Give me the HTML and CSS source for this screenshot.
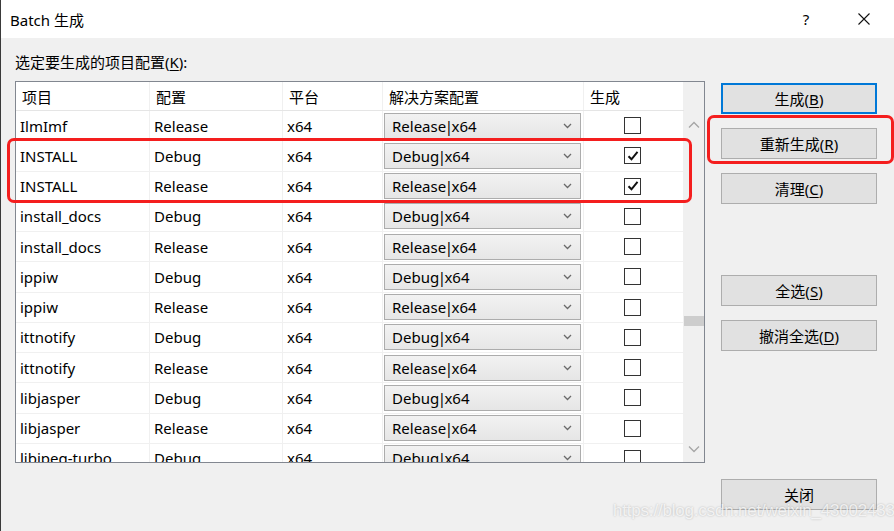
FILE: index.html
```html
<!DOCTYPE html>
<html lang="zh-CN">
<head>
<meta charset="utf-8">
<title>Batch 生成</title>
<link rel="stylesheet" href="styles.css">
</head>
<body>
<div class="window">
  <div class="titlebar">
    <span class="title">Batch 生成</span>
    <span class="tb-help">?</span>
    <span class="tb-close"><svg width="12" height="12" viewBox="0 0 12 12"><path d="M0.5 0.5L11.5 11.5M11.5 0.5L0.5 11.5" stroke="#111" stroke-width="1.1" fill="none"/></svg></span>
  </div>
  <div class="content">
    <div class="left">
      <div class="label">选定要生成的项目配置(<u>K</u>):</div>
      <div class="list">
        <div class="listmain">
          <div class="row head">
            <div class="c c1">项目</div>
            <div class="c c2">配置</div>
            <div class="c c3">平台</div>
            <div class="c c4">解决方案配置</div>
            <div class="c c5">生成</div>
          </div>
          <div class="rows" id="rows"></div>
        </div>
        <div class="scrollbar">
          <div class="headfill"></div>
          <svg class="arrow up" width="12" height="8" viewBox="0 0 12 8"><path d="M1 6.5L6 1.5L11 6.5" stroke="#a6a6a6" stroke-width="1.3" fill="none"/></svg>
          <div class="track"><div class="thumb"></div></div>
          <svg class="arrow down" width="12" height="8" viewBox="0 0 12 8"><path d="M1 1.5L6 6.5L11 1.5" stroke="#a6a6a6" stroke-width="1.3" fill="none"/></svg>
        </div>
      </div>
    </div>
    <div class="right">
      <button class="btn default">生成(<u>B</u>)</button>
      <button class="btn">重新生成(<u>R</u>)</button>
      <button class="btn">清理(<u>C</u>)</button>
      <button class="btn sel">全选(<u>S</u>)</button>
      <button class="btn">撤消全选(<u>D</u>)</button>
      <button class="btn close">关闭</button>
    </div>
  </div>
  <div class="mark mark-rows"></div>
  <div class="mark mark-btn"></div>
  <div class="watermark">https://blog.csdn.net/weixin_43002433</div>
</div>
<script>
var data = [
  ["IlmImf","Release",0],["INSTALL","Debug",1],["INSTALL","Release",1],
  ["install_docs","Debug",0],["install_docs","Release",0],["ippiw","Debug",0],
  ["ippiw","Release",0],["ittnotify","Debug",0],["ittnotify","Release",0],
  ["libjasper","Debug",0],["libjasper","Release",0],["libjpeg-turbo","Debug",0]
];
var chev = '<svg class="chev" width="9" height="6" viewBox="0 0 9 6"><path d="M1 1L4.5 4.5L8 1" stroke="#6a6a6a" stroke-width="1.3" fill="none"/></svg>';
var check = '<svg width="14" height="14" viewBox="0 0 14 14"><path d="M2.5 7.2L5.5 10.3L11.5 2.8" stroke="#111" stroke-width="2" fill="none"/></svg>';
var html = "";
data.forEach(function(d){
  html += '<div class="row">' +
    '<div class="c c1">' + d[0] + '</div>' +
    '<div class="c c2">' + d[1] + '</div>' +
    '<div class="c c3">x64</div>' +
    '<div class="c c4"><div class="combo"><span>' + d[1] + '<span class="pipe">|</span>x64</span>' + chev + '</div></div>' +
    '<div class="c c5"><span class="cb">' + (d[2] ? check : '') + '</span></div>' +
    '</div>';
});
document.getElementById("rows").innerHTML = html;
</script>
</body>
</html>
```
FILE: styles.css
```css
* { box-sizing: border-box; }
html, body { margin: 0; padding: 0; }
body {
  width: 894px;
  height: 531px;
  overflow: hidden;
  background: #f0f0f0;
  font-family: "Noto Sans", "Noto Sans CJK SC", sans-serif;
  font-size: 15px;
  color: #000;
}
.window {
  position: relative;
  height: 531px;
  border-left: 1px solid #3a3a3a;
}
.titlebar {
  height: 38px;
  background: #fff;
  display: flex;
  align-items: center;
  padding-left: 9px;
}
.title { flex: 1; font-size: 15px; }
.tb-help { width: 20px; margin-right: 42px; text-align: center; font-size: 15px; }
.tb-close { width: 12px; margin-right: 24px; display: flex; }
.content {
  display: flex;
  padding-left: 14px;
}
.left { width: 690px; }
.label {
  height: 43px;
  padding-top: 13px;
  line-height: 22px;
}
.list {
  height: 382px;
  border: 1px solid #828790;
  background: #fff;
  display: flex;
  overflow: hidden;
}
.listmain { width: 668px; }
.row {
  display: flex;
  height: 30.25px;
  border-bottom: 1px solid #f0f0f0;
}
.row.head {
  height: 29px;
  border-bottom: 1px solid #e5e5e5;
}
.rows { height: 351px; overflow: hidden; }
.c {
  display: flex;
  align-items: center;
  padding-left: 4px;
  border-right: 1px solid #f0f0f0;
  white-space: nowrap;
  overflow: hidden;
}
.head .c { padding-left: 6px; }
.c1 { width: 134px; }
.c2 { width: 133px; }
.c3 { width: 100px; }
.c4 { width: 201px; padding-left: 1px; }
.c5 { width: 100px; justify-content: center; padding-left: 0; padding-right: 2px; }
.head .c5 { justify-content: flex-start; padding-left: 6px; }
.combo {
  width: 197px;
  height: 26px;
  border: 1px solid #acacac;
  background: linear-gradient(#f2f2f2, #e6e6e6);
  display: flex;
  align-items: center;
  justify-content: space-between;
  padding: 0 8px 0 7px;
}
.pipe { margin: 0 -1.5px; }
.cb {
  width: 17px;
  height: 17px;
  border: 1px solid #333;
  background: #fff;
  display: flex;
  align-items: center;
  justify-content: center;
}
.scrollbar {
  width: 21px;
  background: #f0f0f0;
  display: flex;
  flex-direction: column;
  align-items: center;
}
.headfill { height: 29px; width: 100%; background: #f0f0f0; }
.arrow.up { margin-top: 10px; }
.track { flex: 1; width: 100%; }
.thumb { margin-top: 187px; height: 10px; background: #cdcdcd; width: 100%; }
.arrow.down { margin-bottom: 9px; }
.right {
  width: 156px;
  margin-left: 16px;
  padding-top: 45px;
  display: flex;
  flex-direction: column;
}
.btn {
  height: 31px;
  margin-bottom: 14px;
  background: #e1e1e1;
  border: 1px solid #adadad;
  font-family: inherit;
  font-size: 15px;
  color: #000;
  padding: 0;
}
.btn.default { border: 2px solid #0078d7; }
.btn.sel { margin-top: 57px; }
.btn.close { margin-top: 114px; }
u { text-decoration-thickness: 1px; text-underline-offset: 2px; }
.mark {
  position: absolute;
  border: 3px solid #f41e1e;
  border-radius: 7px;
}
.mark-rows { left: 6px; top: 138px; width: 685px; height: 65px; }
.mark-btn { left: 706px; top: 115px; width: 187px; height: 49px; }
.watermark {
  position: absolute;
  left: 612px;
  top: 501px;
  font-family: "Liberation Sans", sans-serif;
  font-size: 17px;
  color: rgba(255,255,255,0.75);
  text-shadow: 0 0 2px rgba(0,0,0,0.25);
  letter-spacing: -0.2px;
}
```
